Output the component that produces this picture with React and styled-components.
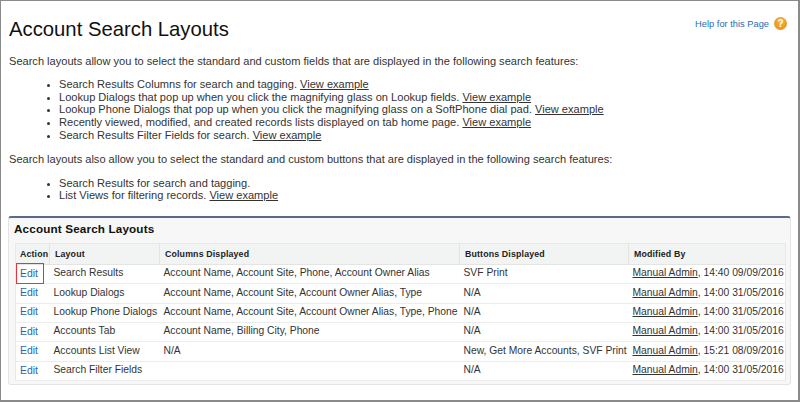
import React from "react";
import styled, { createGlobalStyle } from "styled-components";

const GlobalStyle = createGlobalStyle`
  html, body {
    margin: 0;
    padding: 0;
    background: #fff;
  }
  body {
    font-family: "Liberation Sans", Arial, sans-serif;
    color: #333;
  }
`;

const Page = styled.div`
  box-sizing: border-box;
  width: 800px;
  height: 402px;
  overflow: hidden;
  border: 1px solid #8a8a8a;
  border-right-width: 2px;
  border-bottom-width: 2px;
  padding: 16px 7px 0 7px;
  font-size: 11.07px;
`;

const Copy = styled.div`
  padding-left: 1px;
`;

const Header = styled.div`
  display: flex;
  justify-content: space-between;
  align-items: flex-start;
  padding-right: 4px;
`;

const Title = styled.h1`
  margin: 0;
  font-size: 20.3px;
  font-weight: 400;
  line-height: 24px;
  color: #111;
`;

const Help = styled.a`
  display: flex;
  align-items: center;
  gap: 5px;
  font-size: 9.3px;
  color: #2a6db0;
`;

const HelpIcon = styled.span`
  display: block;
  width: 13px;
  height: 13px;
  border-radius: 50%;
  background: radial-gradient(circle at 50% 35%, #f8b437, #e58a10);
  color: #fff;
  font-size: 10px;
  font-weight: 700;
  line-height: 13px;
  text-align: center;
`;

const Intro = styled.p`
  margin: ${(p) => p.$top}px 0 0;
  line-height: 14px;
`;

const List = styled.ul`
  margin: ${(p) => p.$top}px 0 0;
  padding: 0 0 0 50px;
  line-height: 12.7px;
  list-style: disc;
  li::marker {
    font-size: 9px;
  }
`;

const Example = styled.a`
  color: #333;
  text-decoration: underline;
`;

const Panel = styled.section`
  box-sizing: border-box;
  width: 783px;
  height: 169px;
  margin-top: 14px;
  padding: 3px 4px 5px 5px;
  background: #f7f7f7;
  border: 1px solid #e2e4e6;
  border-top: 2px solid #5a6b85;
  border-radius: 3px;
`;

const PanelTitle = styled.h2`
  margin: 0;
  font-size: 11.7px;
  font-weight: 700;
  line-height: 16px;
  color: #111;
  letter-spacing: 0.15px;
`;

const Table = styled.table`
  width: 771px;
  margin: 6px 0 0 1px;
  border-collapse: collapse;
  table-layout: fixed;
  background: #fff;
  border: 1px solid #e8e8e8;
`;

const HeadCell = styled.th`
  height: 20px;
  padding: 0 0 0 ${(p) => p.$pad ?? 5}px;
  background: #f2f3f3;
  border-left: 1px solid #e4e4e4;
  border-bottom: 1px solid #e4e4e4;
  font-size: 8.8px;
  font-weight: 700;
  letter-spacing: 0.15px;
  text-align: left;
  color: #222;
  white-space: nowrap;
  &:first-child {
    border-left: 0;
  }
`;

const Cell = styled.td`
  height: 16.4px;
  padding: 0 0 2px 4px;
  border-bottom: 1px solid #ececec;
  font-size: 10.3px;
  line-height: 14px;
  white-space: nowrap;
  color: #333;
`;

const ActionCell = styled(Cell)`
  padding: 0 0 1px 4px;
  height: 17.4px;
`;

const EditLink = styled.a`
  position: relative;
  display: inline-block;
  color: #2a66b0;
  font-size: 10.4px;
`;

const Highlight = styled.span`
  position: absolute;
  left: -4px;
  top: -4px;
  width: 26px;
  height: 19px;
  border: 1px solid #e8333c;
`;

const rows = [
  ["Search Results", "Account Name, Account Site, Phone, Account Owner Alias", "SVF Print", "14:40 09/09/2016"],
  ["Lookup Dialogs", "Account Name, Account Site, Account Owner Alias, Type", "N/A", "14:00 31/05/2016"],
  ["Lookup Phone Dialogs", "Account Name, Account Site, Account Owner Alias, Type, Phone", "N/A", "14:00 31/05/2016"],
  ["Accounts Tab", "Account Name, Billing City, Phone", "N/A", "14:00 31/05/2016"],
  ["Accounts List View", "N/A", "New, Get More Accounts, SVF Print", "15:21 08/09/2016"],
  ["Search Filter Fields", "", "N/A", "14:00 31/05/2016"],
];

const View = () => <Example>View example</Example>;

const App = () => (
  <Page>
    <GlobalStyle />
    <Copy>
      <Header>
        <Title>Account Search Layouts</Title>
        <Help>
          Help for this Page
          <HelpIcon>?</HelpIcon>
        </Help>
      </Header>

      <Intro $top={13}>Search layouts allow you to select the standard and custom fields that are displayed in the following search features:</Intro>
      <List $top={10}>
        <li>Search Results Columns for search and tagging. <View /></li>
        <li>Lookup Dialogs that pop up when you click the magnifying glass on Lookup fields. <View /></li>
        <li>Lookup Phone Dialogs that pop up when you click the magnifying glass on a SoftPhone dial pad. <View /></li>
        <li>Recently viewed, modified, and created records lists displayed on tab home page. <View /></li>
        <li>Search Results Filter Fields for search. <View /></li>
      </List>

      <Intro $top={10}>Search layouts also allow you to select the standard and custom buttons that are displayed in the following search features:</Intro>
      <List $top={11}>
        <li>Search Results for search and tagging.</li>
        <li>List Views for filtering records. <View /></li>
      </List>
    </Copy>

    <Panel>
      <PanelTitle>Account Search Layouts</PanelTitle>
      <Table>
        <colgroup>
          <col style={{ width: 34 }} />
          <col style={{ width: 110 }} />
          <col style={{ width: 300 }} />
          <col style={{ width: 169 }} />
          <col />
        </colgroup>
        <thead>
          <tr>
            <HeadCell $pad={4}>Action</HeadCell>
            <HeadCell>Layout</HeadCell>
            <HeadCell>Columns Displayed</HeadCell>
            <HeadCell>Buttons Displayed</HeadCell>
            <HeadCell>Modified By</HeadCell>
          </tr>
        </thead>
        <tbody>
          {rows.map((row, i) => (
            <tr key={row[0]}>
              <ActionCell>
                <EditLink>
                  Edit
                  {i === 0 && <Highlight />}
                </EditLink>
              </ActionCell>
              <Cell>{row[0]}</Cell>
              <Cell>{row[1]}</Cell>
              <Cell>{row[2]}</Cell>
              <Cell>
                <Example>Manual Admin</Example>, {row[3]}
              </Cell>
            </tr>
          ))}
        </tbody>
      </Table>
    </Panel>
  </Page>
);

export default App;
